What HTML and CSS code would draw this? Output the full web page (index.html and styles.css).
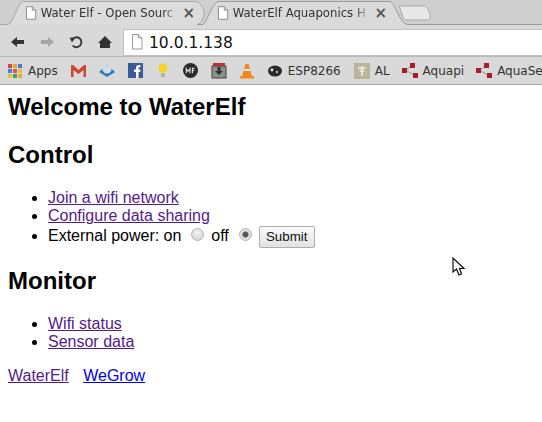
FILE: index.html
```html
<!DOCTYPE html>
<html lang="en">
<head>
    <meta charset="UTF-8">
    <title>WaterElf</title>
    <link rel="stylesheet" href="styles.css">
</head>
<body>
    <!-- browser frame -->
    <header class="chrome">
        <div class="tabstrip">
            <svg class="tabshapes" width="542" height="25" viewBox="0 0 542 25">
                <path d="M203 24.5C208 20 212 4 218 1.5H390C396 4 399 22 407 24.5" fill="#dadada" stroke="#9a9a9a"/>
                <path d="M0 24.5H8C14 22 17 4 23 1.5H196C201 3 205 10 204 15C203 20 200 24 197 24.5" fill="#dcdcdc" stroke="#a8a8a8"/>
                <path d="M197 24.5H203M407 24.5H542" fill="none" stroke="#9a9a9a"/>
                <path d="M399 6H425C428 8 431 15 430 18C430 20 428 20 427 20H406C403 20 401 10 399 6Z" fill="#e8e8e8" stroke="#a8a8a8"/>
            </svg>
            <div class="tab tab-first">
                <svg class="page-icon" width="12" height="14" viewBox="0 0 12 14"><path d="M1.5.5H7.5L11 4V13.5H1.5Z" fill="#fff" stroke="#8a8a8a"/><path d="M7.5.5V4H11" fill="#ddd" stroke="#8a8a8a"/></svg>
                <span class="tab-title">Water Elf - Open Sourc</span>
                <span class="tab-close">×</span>
            </div>
            <div class="tab tab-second">
                <svg class="page-icon" width="12" height="14" viewBox="0 0 12 14"><path d="M1.5.5H7.5L11 4V13.5H1.5Z" fill="#fff" stroke="#8a8a8a"/><path d="M7.5.5V4H11" fill="#ddd" stroke="#8a8a8a"/></svg>
                <span class="tab-title">WaterElf Aquaponics H</span>
                <span class="tab-close">×</span>
            </div>
        </div>

        <div class="toolbar">
            <svg class="nav-icon" width="14" height="12" viewBox="0 0 14 12"><path d="M0 6L6 1V4H13V8H6V11Z" fill="#333"/></svg>
            <svg class="nav-icon" width="14" height="12" viewBox="0 0 14 12"><path d="M14 6L8 1V4H1V8H8V11Z" fill="#a6a6a6"/></svg>
            <svg class="nav-icon" width="14" height="14" viewBox="0 0 14 14"><path d="M3.6 10.5A5 5 0 1 0 3.2 4.5" fill="none" stroke="#333" stroke-width="1.8"/><path d="M0.5 2.5L6 3L3 7.5Z" fill="#333"/></svg>
            <svg class="nav-icon" width="14" height="13" viewBox="0 0 14 13"><path d="M7 0L14 7H12V12H2V7H0Z" fill="#333"/></svg>
            <div class="omnibox">
                <svg width="12" height="16" viewBox="0 0 12 16"><path d="M1.5.5H7.5L11 4V15H1.5Z" fill="#fff" stroke="#999"/><path d="M7.5.5V4H11" fill="#ddd" stroke="#999"/></svg>
                <span class="url">10.0.1.138</span>
            </div>
        </div>

        <nav class="bookmarks">
            <span class="bm">
                <svg width="14" height="14" viewBox="0 0 14 14">
                    <rect x="0" y="0" width="4" height="4" fill="#d9453a"/><rect x="5" y="0" width="4" height="4" fill="#e8a33a"/><rect x="10" y="0" width="4" height="4" fill="#3d7fe0"/>
                    <rect x="0" y="5" width="4" height="4" fill="#3d7fe0"/><rect x="5" y="5" width="4" height="4" fill="#e05a3a"/><rect x="10" y="5" width="4" height="4" fill="#e8c03a"/>
                    <rect x="0" y="10" width="4" height="4" fill="#e8c03a"/><rect x="5" y="10" width="4" height="4" fill="#3fa45a"/><rect x="10" y="10" width="4" height="4" fill="#e8a33a"/>
                </svg>
                Apps
            </span>
            <svg class="bm-icon" width="15" height="12" viewBox="0 0 15 12"><path d="M0 0H2L7.5 5L13 0H15V12H12.5V5L7.5 9L2.5 5V12H0Z" fill="#cf4437"/></svg>
            <svg class="bm-icon" width="16" height="14" viewBox="0 0 16 14"><path d="M0 8L8 1L16 8L8 13Z" fill="#2a78b8"/><ellipse cx="8" cy="5.5" rx="4.5" ry="4" fill="#d5dde4"/></svg>
            <svg class="bm-icon" width="15" height="15" viewBox="0 0 15 15"><rect width="15" height="15" fill="#3b5a9b"/><path d="M8 15V9H6V6.5H8V5C8 3 9 2 11 2H12.5V4.3H11.3C10.7 4.3 10.5 4.6 10.5 5.2V6.5H12.5L12.2 9H10.5V15Z" fill="#fff"/></svg>
            <svg class="bm-icon bulb" width="10" height="15" viewBox="0 0 10 15"><circle cx="5" cy="5" r="4.6" fill="#f5d327"/><rect x="3" y="10" width="4" height="4" fill="#b5b5a5"/></svg>
            <svg class="bm-icon" width="15" height="15" viewBox="0 0 16 16"><circle cx="8" cy="8" r="8" fill="#2b2b2b"/><path d="M3.5 11V6L5.5 9L7.5 6V11M10 11V5.5H12.5M10 8H12" fill="none" stroke="#eee" stroke-width="1.1"/></svg>
            <svg class="bm-icon" width="16" height="16" viewBox="0 0 16 16"><rect x="1" y="3" width="14" height="12" fill="#8c9088" stroke="#444"/><rect x="2" y="0" width="12" height="3" fill="#b5323a"/><path d="M6.5 4H9.5V8H12L8 12L4 8H6.5Z" fill="#333"/></svg>
            <svg class="bm-icon" width="14" height="16" viewBox="0 0 14 16"><path d="M5.5 1H8.5L12 13H14V15.5H0V13H2Z" fill="#ef8a1a"/><path d="M4.5 6H9.5L10 8H4Z" fill="#f4f4f4"/></svg>
            <span class="bm">
                <svg width="15" height="12" viewBox="0 0 15 12"><ellipse cx="8" cy="6" rx="7" ry="5.5" fill="#2a2a2a"/><circle cx="5" cy="5" r="1.4" fill="#eee"/><circle cx="10" cy="7" r="1.2" fill="#bbb"/></svg>
                ESP8266
            </span>
            <span class="bm bm-tight">
                <svg width="16" height="16" viewBox="0 0 16 16"><rect width="16" height="16" fill="#b9b49a"/><path d="M8 3V13M4 5H12M5.5 8H10.5" stroke="#f2f0e4" stroke-width="1.5"/></svg>
                AL
            </span>
            <span class="bm bm-tight">
                <svg width="16" height="15" viewBox="0 0 16 15"><path d="M3 7L10 3M3 7L12 12" stroke="#999"/><rect y="5" width="5" height="5" fill="#a81c28"/><rect x="8" y="0" width="5" height="5" fill="#a81c28"/><rect x="11" y="10" width="5" height="5" fill="#a81c28"/></svg>
                Aquapi
            </span>
            <span class="bm bm-tight">
                <svg width="16" height="15" viewBox="0 0 16 15"><path d="M3 7L10 3M3 7L12 12" stroke="#999"/><rect y="5" width="5" height="5" fill="#a81c28"/><rect x="8" y="0" width="5" height="5" fill="#a81c28"/><rect x="11" y="10" width="5" height="5" fill="#a81c28"/></svg>
                AquaSe
            </span>
        </nav>
    </header>

    <main class="page">
        <h2 class="first">Welcome to WaterElf</h2>

        <h2>Control</h2>
        <ul>
            <li><a class="seen" href="#">Join a wifi network</a></li>
            <li><a class="seen" href="#">Configure data sharing</a></li>
            <li>
                <form class="power" action="#">
                    External power: on
                    <input class="radio" type="radio" name="power">
                    off
                    <input class="radio" type="radio" name="power" checked>
                    <button class="submit" type="submit">Submit</button>
                </form>
            </li>
        </ul>

        <h2>Monitor</h2>
        <ul>
            <li><a class="seen" href="#">Wifi status</a></li>
            <li><a class="seen" href="#">Sensor data</a></li>
        </ul>

        <p class="footer-links">
            <a class="seen" href="#">WaterElf</a>
            <a class="fresh" href="#">WeGrow</a>
        </p>
    </main>

    <svg class="cursor" width="14" height="20" viewBox="0 0 14 20"><path d="M1 1V15L4.5 12L7 18L9.5 17L7.5 11.5H12Z" fill="#fff" stroke="#111" stroke-width="1.2"/></svg>
</body>
</html>
```

FILE: styles.css
```css
* {
    box-sizing: border-box;
}
html, body {
    height: 100%;
}
body {
    margin: 0;
    background: #fff;
    overflow: hidden;
    position: relative;
    font-family: "Liberation Sans", Arial, sans-serif;
    font-size: 16px;
    color: #000;
}

/* browser frame */
.chrome {
    font-family: "DejaVu Sans", sans-serif;
    font-size: 12px;
    color: #333;
    background: #d9d9d9;
    height: 85px;
    border-bottom: 1px solid #a9a9a9;
}
.tabstrip {
    position: relative;
    display: flex;
    height: 24px;
    background: #cfcfcf;
    padding-left: 25px;
}
.tabshapes {
    position: absolute;
    left: 0;
    top: 0;
}
.tab {
    position: relative;
    display: flex;
    align-items: center;
    height: 24px;
    padding-top: 1px;
    gap: 4px;
}
.tab-first {
    width: 170px;
}
.tab-second {
    margin-left: 22px;
    width: 170px;
}
.tab-title {
    width: 138px;
    font-size: 11.7px;
    white-space: nowrap;
    overflow: hidden;
    mask-image: linear-gradient(to right, #000 92%, rgba(0, 0, 0, 0.25));
}
.tab-close {
    font-size: 15px;
    font-weight: bold;
    color: #555;
    margin-left: 4px;
}
.toolbar {
    display: flex;
    align-items: center;
    height: 33px;
    padding: 4px 0 0 11px;
    border-bottom: 1px solid #b8b8b8;
}
.nav-icon {
    margin-right: 15px;
    flex: none;
}
.omnibox {
    display: flex;
    align-items: center;
    gap: 6px;
    flex: 1;
    height: 27px;
    margin-left: -4px;
    padding-left: 7px;
    background: #fff;
    border: 1px solid #c0c0c0;
    border-right: 0;
    border-radius: 2px 0 0 2px;
}
.url {
    font-size: 15.5px;
    color: #111;
    padding-top: 1px;
}
.bookmarks {
    display: flex;
    align-items: center;
    height: 27px;
    padding-left: 8px;
    gap: 13px;
    white-space: nowrap;
    overflow: hidden;
}
.bm {
    display: flex;
    align-items: center;
    gap: 6px;
}
.bm-tight {
    gap: 5px;
    margin-right: -1px;
}
.bm-icon {
    flex: none;
}
.bulb {
    margin-left: 2px;
    margin-right: 2px;
}

/* page content */
.page {
    padding: 0 8px;
}
h2 {
    font-size: 24px;
    margin: 20px 0;
}
h2.first {
    margin-top: 8px;
}
ul {
    margin: 16px 0;
    padding-left: 40px;
}
a.seen {
    color: #551a8b;
}
a.fresh {
    color: #0000ee;
}
.power {
    margin: 0;
}
.radio {
    appearance: none;
    width: 13px;
    height: 13px;
    margin: 3px 3px 0 5px;
    border: 1px solid #b4b4b4;
    border-radius: 50%;
    background: radial-gradient(circle at 50% 35%, #f2f2f2, #cfcfcf);
}
.radio:checked {
    margin-left: 6px;
    background: radial-gradient(circle, #555 0 2.5px, #e0e0e0 3.5px);
}
.submit {
    font-family: "Liberation Sans", Arial, sans-serif;
    font-size: 13.33px;
    height: 22px;
    width: 56px;
    padding: 0;
    margin: 0 0 -1px -1px;
    color: #111;
    border: 1px solid #adadad;
    border-radius: 2px;
    background: linear-gradient(#fafafa, #e2e2e2);
}
.footer-links {
    margin: 16px 0;
    word-spacing: 10px;
}
.cursor {
    position: absolute;
    left: 452px;
    top: 257px;
}
```
